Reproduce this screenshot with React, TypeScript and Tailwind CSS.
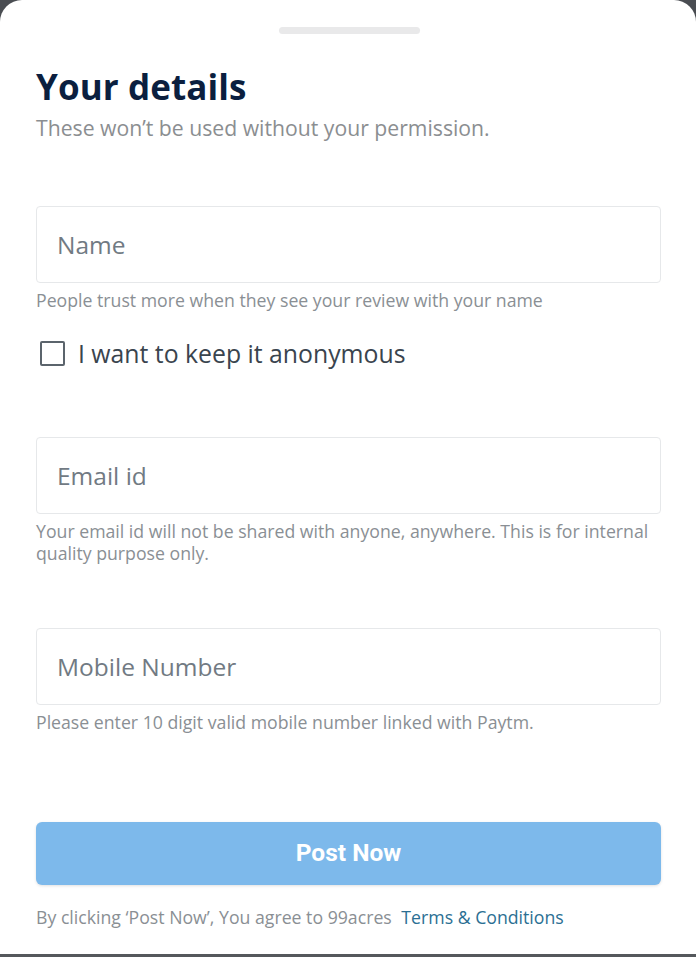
import React, { useState } from 'react';

const Field = ({ placeholder, type = 'text' }: { placeholder: string; type?: string }) => (
  <input
    type={type}
    placeholder={placeholder}
    className="w-full h-[77px] border border-[#e6e8ea] rounded-[4px] px-[20px] text-[24.5px] text-[#2f3a44] placeholder-[#717a83] outline-none bg-white"
  />
);

const App = () => {
  const [anon, setAnon] = useState(false);

  return (
    <div className="w-[696px] h-[957px] bg-[#4a4d52] flex flex-col font-['Open_Sans',sans-serif]">
      <div className="flex-1 bg-white rounded-t-[22px] flex flex-col px-[36px] pr-[35px]">
        {/* drag handle */}
        <div className="self-center w-[141px] h-[7px] bg-[#e9e9ea] rounded-full mt-[27px] mr-[-1px]" />

        <h1 className="mt-[32px] text-[35px] leading-[42px] font-bold text-[#0b1f3f] tracking-[0.1px]">Your details</h1>
        <p className="mt-[6px] text-[21.2px] leading-[28px] text-[#8b8e91]">These won’t be used without your permission.</p>

        <div className="mt-[64px]">
          <Field placeholder="Name" />
        </div>
        <p className="mt-[6px] text-[17.7px] leading-[22px] text-[#8a8f94]">
          People trust more when they see your review with your name
        </p>

        <label className="mt-[26px] flex items-center gap-[13px] cursor-pointer" onClick={() => setAnon(!anon)}>
          <span className={`ml-[4px] w-[25px] h-[25px] shrink-0 border-[2.5px] border-[#5b646c] rounded-[2px] ${anon ? 'bg-[#5b646c]' : 'bg-white'}`} />
          <span className="text-[24.8px] leading-[32px] text-[#3a444e]">I want to keep it anonymous</span>
        </label>

        <div className="mt-[68px]">
          <Field placeholder="Email id" type="email" />
        </div>
        <p className="mt-[6px] text-[17.7px] leading-[22px] text-[#8a8f94]">
          Your email id will not be shared with anyone, anywhere. This is for internal quality purpose only.
        </p>

        <div className="mt-[64px]">
          <Field placeholder="Mobile Number" type="tel" />
        </div>
        <p className="mt-[6px] text-[17.7px] leading-[22px] text-[#8a8f94]">
          Please enter 10 digit valid mobile number linked with Paytm.
        </p>

        <button className="mt-[89px] w-full h-[63px] rounded-[6px] bg-[#7db9eb] text-white text-[24.5px] font-bold font-['Roboto',sans-serif] shadow-[0_1px_3px_rgba(0,0,0,0.12)]">
          Post Now
        </button>

        <p className="mt-[21px] text-[17.7px] leading-[22px] text-[#8a8f94]">
          By clicking ‘Post Now’, You agree to 99acres{' '}
          <span className="ml-[5px] text-[#2b6f93]">Terms &amp; Conditions</span>
        </p>
      </div>
      <div className="h-[3px] bg-[#55585c]" />
    </div>
  );
};

export default App;
